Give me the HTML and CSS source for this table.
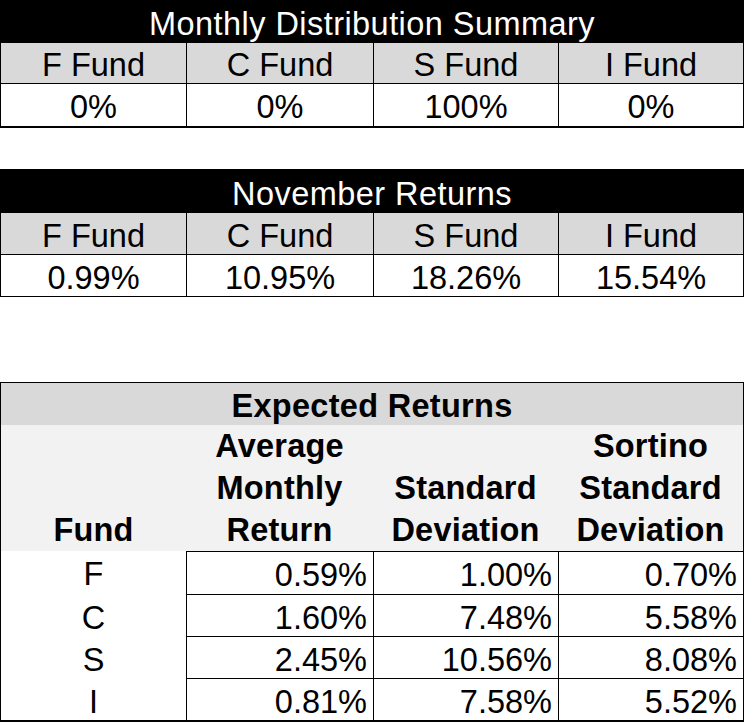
FILE: index.html
```html
<!DOCTYPE html>
<html lang="en">
<head>
<meta charset="utf-8">
<title>TSP Summary</title>
<link rel="stylesheet" href="styles.css">
</head>
<body>
<section class="sheet sheet-dist">
  <div class="title dark t1">Monthly Distribution Summary</div>
  <div class="row head h1">
    <div class="cell">F Fund</div>
    <div class="cell sep">C Fund</div>
    <div class="cell sep">S Fund</div>
    <div class="cell sep">I Fund</div>
  </div>
  <div class="row data d1">
    <div class="cell">0%</div>
    <div class="cell sep">0%</div>
    <div class="cell sep">100%</div>
    <div class="cell sep">0%</div>
  </div>
</section>

<section class="sheet sheet-nov">
  <div class="title dark t2">November Returns</div>
  <div class="row head h2">
    <div class="cell">F Fund</div>
    <div class="cell sep">C Fund</div>
    <div class="cell sep">S Fund</div>
    <div class="cell sep">I Fund</div>
  </div>
  <div class="row data d2">
    <div class="cell">0.99%</div>
    <div class="cell sep">10.95%</div>
    <div class="cell sep">18.26%</div>
    <div class="cell sep">15.54%</div>
  </div>
</section>

<section class="sheet sheet-exp">
  <div class="title grey t3">Expected Returns</div>
  <div class="row colhead">
    <div class="hcell">Fund</div>
    <div class="hcell">Average<br>Monthly<br>Return</div>
    <div class="hcell">Standard<br>Deviation</div>
    <div class="hcell">Sortino<br>Standard<br>Deviation</div>
  </div>
  <div class="row erow first">
    <div class="fund">F</div>
    <div class="num">0.59%</div>
    <div class="num">1.00%</div>
    <div class="num">0.70%</div>
  </div>
  <div class="row erow">
    <div class="fund">C</div>
    <div class="num">1.60%</div>
    <div class="num">7.48%</div>
    <div class="num">5.58%</div>
  </div>
  <div class="row erow">
    <div class="fund">S</div>
    <div class="num">2.45%</div>
    <div class="num">10.56%</div>
    <div class="num">8.08%</div>
  </div>
  <div class="row erow last">
    <div class="fund">I</div>
    <div class="num">0.81%</div>
    <div class="num">7.58%</div>
    <div class="num">5.52%</div>
  </div>
</section>
</body>
</html>
```

FILE: styles.css
```css
* { box-sizing: border-box; }

html, body {
  margin: 0;
  padding: 0;
  background: #ffffff;
}

body {
  font-family: "Liberation Sans", Arial, sans-serif;
  font-size: 32.5px;
  color: #000000;
}

.sheet {
  width: 744px;
  border-left: 1px solid #000;
  border-right: 1px solid #000;
}

.sheet-dist { border-bottom: 2px solid #000; }
.sheet-nov { margin-top: 41px; border-bottom: 1px solid #000; }
.sheet-exp {
  margin-top: 85px;
  border-top: 1px solid #000;
  border-bottom: 2px solid #000;
}

.title {
  text-align: center;
  line-height: 36px;
  white-space: nowrap;
}
.dark { background: #000; color: #fff; letter-spacing: 0.45px; }
.grey { background: #d9d9d9; font-weight: bold; letter-spacing: 0.3px; }

.t1 { height: 43px; padding-top: 6px; }
.t2 { height: 44px; padding-top: 7px; }
.t3 { height: 42px; padding-top: 5px; }

.row {
  display: grid;
  grid-template-columns: 185px 187px 185px 185px;
}

.cell {
  text-align: center;
  line-height: 36px;
  padding-top: 5px;
  white-space: nowrap;
}
.sep { border-left: 1px solid #000; }

.head { background: #d9d9d9; border-bottom: 1px solid #000; }
.h1 { height: 41px; }
.h1 .cell { padding-top: 4px; }
.d1 { height: 42px; }
.h2 { height: 42px; }
.d2 { height: 41px; }

.colhead {
  height: 126px;
  background: #f2f2f2;
}
.hcell {
  display: flex;
  flex-direction: column;
  justify-content: flex-end;
  text-align: center;
  font-weight: bold;
  line-height: 42px;
  letter-spacing: 0.2px;
}

.erow .fund {
  text-align: center;
  line-height: 36px;
  padding-top: 5px;
}
.erow .num {
  text-align: right;
  padding-right: 6px;
  line-height: 36px;
  padding-top: 5px;
  border-left: 1px solid #000;
  border-bottom: 1px solid #000;
}
.erow { height: 42px; }
.erow.first { height: 44px; }
.erow.first .num { border-top: 1px solid #000; }
.erow.last { height: 41px; }
.erow.last .num { border-bottom: 0; }
```
